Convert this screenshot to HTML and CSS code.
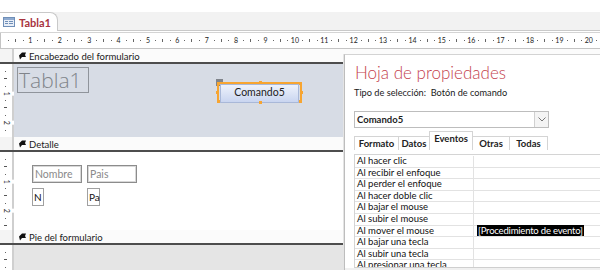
FILE: index.html
```html
<!DOCTYPE html>
<html>
<head>
<meta charset="utf-8">
<title>Tabla1</title>
<link rel="stylesheet" href="styles.css">
</head>
<body>
<div class="window">
	<div class="doc_strip">
		<div class="doc_tab">
			<svg class="form_icon" width="12" height="10" viewBox="0 0 12 10">
				<rect x="0.5" y="0.5" width="11" height="9" fill="#e8eef7" stroke="#6f8fb8"/>
				<rect x="1" y="1" width="10" height="2" fill="#8eaad0"/>
				<rect x="2" y="4" width="3" height="1" fill="#6f8fb8"/>
				<rect x="6" y="4" width="4" height="1" fill="#6f8fb8"/>
				<rect x="2" y="6" width="3" height="1" fill="#6f8fb8"/>
				<rect x="6" y="6" width="4" height="1" fill="#6f8fb8"/>
			</svg>
			<span class="doc_title">Tabla1</span>
		</div>
	</div>

	<div class="ruler_row">
		<div class="ruler_corner"></div>
		<div class="hruler">
			<span>1</span><span>2</span><span>3</span><span>4</span><span>5</span>
			<span>6</span><span>7</span><span>8</span><span>9</span><span>10</span>
			<span>11</span><span>12</span><span>13</span><span>14</span><span>15</span>
			<span>16</span><span>17</span><span>18</span><span>19</span><span>20</span>
		</div>
	</div>

	<div class="design">
		<!-- form header -->
		<div class="section_bar">
			<div class="vr_blank"></div>
			<div class="bar_label">
				<svg class="bar_icon" width="7" height="8" viewBox="0 0 7 8"><path d="M0 3.5 L3 0.5 L7 0.5 L6 3 L7 5 L3 5 L1 7.5 Z" fill="#111"/></svg>
				Encabezado del formulario
			</div>
		</div>
		<div class="section header_body">
			<div class="vruler"><span>1</span><span>2</span></div>
			<div class="canvas">
				<div class="lbl_title">Tabla1</div>
				<div class="move_handle"></div>
				<div class="sel_frame">
					<div class="cmd_button">Comando5</div>
					<i class="h h_tl"></i><i class="h h_tc"></i><i class="h h_tr"></i>
					<i class="h h_ml"></i><i class="h h_mr"></i>
					<i class="h h_bl"></i><i class="h h_bc"></i><i class="h h_br"></i>
				</div>
			</div>
		</div>

		<!-- detail -->
		<div class="section_bar">
			<div class="vr_blank"></div>
			<div class="bar_label">
				<svg class="bar_icon" width="7" height="8" viewBox="0 0 7 8"><path d="M0 3.5 L3 0.5 L7 0.5 L6 3 L7 5 L3 5 L1 7.5 Z" fill="#111"/></svg>
				Detalle
			</div>
		</div>
		<div class="section detail_body">
			<div class="vruler"><span>1</span><span>2</span></div>
			<div class="canvas">
				<div class="field_lbl lbl_nombre">Nombre</div>
				<div class="field_lbl lbl_pais">Pais</div>
				<div class="field_box box_nombre">N</div>
				<div class="field_box box_pais">Pa</div>
			</div>
		</div>

		<!-- footer -->
		<div class="section_bar">
			<div class="vr_blank"></div>
			<div class="bar_label">
				<svg class="bar_icon" width="7" height="8" viewBox="0 0 7 8"><path d="M0 3.5 L3 0.5 L7 0.5 L6 3 L7 5 L3 5 L1 7.5 Z" fill="#111"/></svg>
				Pie del formulario
			</div>
		</div>
		<div class="section footer_body">
			<div class="vruler"></div>
			<div class="canvas"></div>
		</div>
	</div>

	<!-- floating property sheet -->
	<div class="prop_sheet">
		<h1>Hoja de propiedades</h1>
		<p class="sel_type">Tipo de selección:&nbsp; Botón de comando</p>
		<div class="combo">
			<span class="combo_value">Comando5</span>
			<span class="combo_btn">
				<svg width="8" height="5" viewBox="0 0 8 5"><path d="M0.5 0.5 L4 4 L7.5 0.5" fill="none" stroke="#777" stroke-width="1"/></svg>
			</span>
		</div>
		<div class="prop_tabs">
			<span class="ptab t_formato">Formato</span>
			<span class="ptab t_datos">Datos</span>
			<span class="ptab t_eventos active">Eventos</span>
			<span class="ptab t_otras">Otras</span>
			<span class="ptab t_todas">Todas</span>
		</div>
		<div class="prop_grid">
			<div class="prow"><span class="pname">Al hacer clic</span><span class="pval"></span></div>
			<div class="prow"><span class="pname">Al recibir el enfoque</span><span class="pval"></span></div>
			<div class="prow"><span class="pname">Al perder el enfoque</span><span class="pval"></span></div>
			<div class="prow"><span class="pname">Al hacer doble clic</span><span class="pval"></span></div>
			<div class="prow"><span class="pname">Al bajar el mouse</span><span class="pval"></span></div>
			<div class="prow"><span class="pname">Al subir el mouse</span><span class="pval"></span></div>
			<div class="prow"><span class="pname">Al mover el mouse</span><span class="pval"><span class="selected_val">[Procedimiento de evento]</span></span></div>
			<div class="prow"><span class="pname">Al bajar una tecla</span><span class="pval"></span></div>
			<div class="prow"><span class="pname">Al subir una tecla</span><span class="pval"></span></div>
			<div class="prow"><span class="pname">Al presionar una tecla</span><span class="pval"></span></div>
		</div>
		<div class="sheet_bottom"></div>
	</div>
</div>
</body>
</html>
```

FILE: styles.css
```css
body {
	margin: 0;
	font-family: Lato, "Open Sans", sans-serif;
	color: #1e1e1e;
	background: #fff;
}
.window {
	position: relative;
	width: 600px;
	height: 270px;
	overflow: hidden;
	padding-top: 12px;
	box-sizing: border-box;
}

/* document tab strip */
.doc_strip {
	height: 18px;
	background: #f2f2f2;
	border-bottom: 1px solid #c9c9c9;
	display: flex;
	align-items: flex-end;
}
.doc_tab {
	display: flex;
	align-items: center;
	gap: 4px;
	height: 18px;
	padding: 0 6px 0 3px;
	background: #fff;
	border: 1px solid #c9c9c9;
	border-left: none;
	border-bottom: none;
	border-radius: 0 8px 0 0;
	margin-bottom: -1px;
}
.form_icon {
	display: block;
}
.doc_title {
	font-size: 11px;
	font-weight: 700;
	color: #a8333e;
}

/* rulers */
.ruler_row {
	display: flex;
	height: 15px;
	margin-top: 1px;
	border-top: 1px solid #d4d4d4;
	border-bottom: 1px solid #c4c4c4;
}
.ruler_corner {
	width: 13px;
	border-right: 1px solid #c4c4c4;
	background: #fff;
}
.hruler {
	flex: 1;
	display: flex;
	padding-left: 14.7px;
	background:
		repeating-linear-gradient(90deg, transparent 0 7px, #666 7px 8px, transparent 8px 14.7px) 0 7px / 100% 1px no-repeat,
		repeating-linear-gradient(90deg, transparent 0 14px, #666 14px 15px, transparent 15px 29.4px) 0 6px / 100% 3px no-repeat,
		#fff;
}
.hruler span {
	flex: none;
	width: 29.4px;
	text-align: center;
	font-size: 7px;
	line-height: 15px;
	color: #222;
}

/* design surface */
.design {
	display: flex;
	flex-direction: column;
}
.section_bar {
	display: flex;
	height: 13px;
	border-bottom: 2px solid #4d4d4d;
}
.vr_blank {
	width: 12px;
	border-right: 2px solid #cfcfcf;
	background: #f4f4f4;
}
.bar_label {
	flex: 1;
	display: flex;
	align-items: center;
	gap: 3px;
	padding: 1px 0 0 5px;
	font-size: 9.5px;
	background: #fbfbfb;
	color: #1a1a1a;
}
.bar_icon {
	display: block;
}
.section {
	display: flex;
}
.header_body {
	height: 73px;
}
.detail_body {
	height: 78px;
}
.footer_body {
	height: 40px;
}
.vruler {
	width: 12px;
	border-right: 2px solid #cfcfcf;
	display: flex;
	flex-direction: column;
	align-items: center;
	padding-top: 14.7px;
	background:
		repeating-linear-gradient(180deg, transparent 0 7px, #666 7px 8px, transparent 8px 14.7px) 5px 0 / 1px 100% no-repeat,
		repeating-linear-gradient(180deg, transparent 0 14px, #555 14px 15px, transparent 15px 29.4px) 4px 0 / 3px 100% no-repeat,
		#fff;
}
.vruler span {
	flex: none;
	height: 29.4px;
	line-height: 29.4px;
	font-size: 7px;
	color: #222;
	background: #fff;
	transform: rotate(90deg);
}
.canvas {
	position: relative;
	flex: 1;
}
.header_body .canvas {
	background: #d7dce5;
}
.detail_body .canvas {
	background: #fff;
}
.footer_body .canvas {
	background: #e5e5e5;
}

/* controls on the form canvas */
.lbl_title {
	position: absolute;
	left: 3px;
	top: 3px;
	width: 72px;
	height: 26px;
	border: 1px solid #8f949b;
	font-family: "Open Sans", sans-serif;
	font-weight: 300;
	font-size: 21px;
	line-height: 24px;
	padding-left: 1px;
	color: #80848a;
	box-sizing: border-box;
}
.move_handle {
	position: absolute;
	left: 202px;
	top: 15px;
	width: 7px;
	height: 7px;
	background: #80848a;
}
.sel_frame {
	position: absolute;
	left: 203px;
	top: 18px;
	width: 85px;
	height: 21px;
	border: 2px solid #f7a531;
	box-sizing: border-box;
}
.cmd_button {
	height: 100%;
	margin: 0 1px;
	border: 1px solid #a9b8d8;
	background: linear-gradient(#eef2fb, #c9d5f0);
	font-size: 10.5px;
	line-height: 15px;
	text-align: center;
	color: #222;
}
.h {
	position: absolute;
	width: 3px;
	height: 3px;
	background: #f7a531;
}
.h_tl { left: -2px; top: -2px; }
.h_tc { left: 40px; top: -3px; }
.h_tr { right: -2px; top: -2px; }
.h_ml { left: -3px; top: 7px; }
.h_mr { right: -3px; top: 7px; }
.h_bl { left: -2px; bottom: -2px; }
.h_bc { left: 40px; bottom: -3px; }
.h_br { right: -2px; bottom: -2px; }

.field_lbl {
	position: absolute;
	top: 13px;
	width: 50px;
	height: 18px;
	border: 1px solid #8c8c8c;
	box-shadow: inset 0 0 0 1px #d8d8d8;
	font-size: 10.5px;
	line-height: 16px;
	padding-left: 2px;
	color: #8a8a8a;
	box-sizing: border-box;
}
.lbl_nombre { left: 18px; }
.lbl_pais { left: 73px; }
.field_box {
	position: absolute;
	top: 36px;
	height: 18px;
	border: 1px solid #a0a0a0;
	font-size: 10px;
	line-height: 16px;
	padding-left: 1px;
	color: #111;
	white-space: nowrap;
	box-sizing: border-box;
}
.box_nombre { left: 18px; width: 12px; }
.box_pais { left: 73px; width: 13px; }

/* property sheet */
.prop_sheet {
	position: absolute;
	left: 344px;
	top: 54px;
	right: 0;
	bottom: 0;
	display: flex;
	flex-direction: column;
	padding-left: 9px;
	background: #fff;
	border-left: 1px solid #bdbdbd;
	border-top: 1px solid #d3d3d3;
	box-shadow: -1px 0 0 #e4e4e4;
}
.prop_sheet h1 {
	margin: 7px 0 0 1px;
	font-weight: 300;
	font-size: 17px;
	line-height: 22px;
	color: #c4424e;
}
.sel_type {
	margin: 3px 0 0 0;
	font-size: 9.2px;
	line-height: 12px;
	color: #1a1a1a;
}
.combo {
	display: flex;
	width: 195px;
	height: 17px;
	margin-top: 12px;
	border: 1px solid #bdbdbd;
	box-sizing: border-box;
}
.combo_value {
	flex: 1;
	padding-left: 2px;
	font-size: 9.5px;
	line-height: 15px;
	font-weight: 700;
}
.combo_btn {
	width: 13px;
	display: flex;
	align-items: center;
	justify-content: center;
	border-left: 1px solid #d0d0d0;
	background: #f4f4f4;
}
.prop_tabs {
	display: flex;
	align-items: flex-end;
	height: 19px;
	margin-top: 3px;
}
.ptab {
	height: 14px;
	border: 1px solid #d4d4d4;
	border-bottom: none;
	margin-right: -1px;
	font-size: 9.5px;
	line-height: 14px;
	font-weight: 700;
	text-align: center;
	color: #222;
	background: #fff;
	box-sizing: border-box;
}
.t_formato { width: 45px; }
.t_datos { width: 32px; }
.t_eventos { width: 44px; }
.t_otras { width: 38px; }
.t_todas { width: 39px; }
.ptab.active {
	position: relative;
	z-index: 1;
	height: 19px;
	line-height: 13px;
}
.prop_grid {
	height: 111px;
	width: 260px;
	overflow: hidden;
	margin-top: 4px;
	border-top: 1px solid #d4d4d4;
	border-left: 1px solid #d4d4d4;
	border-bottom: 1px solid #cfcfcf;
	padding-top: 1px;
}
.prow {
	display: flex;
	height: 11.6px;
	border-bottom: 1px solid #e2e2e2;
	box-sizing: border-box;
	font-size: 9.5px;
	line-height: 10.6px;
}
.pname {
	width: 119px;
	flex: none;
	padding-left: 2px;
	border-right: 1px solid #e2e2e2;
	box-sizing: border-box;
	white-space: nowrap;
	color: #111;
}
.pval {
	flex: 1;
	padding-left: 3px;
	white-space: nowrap;
}
.selected_val {
	background: #000;
	color: #fff;
	padding: 0 1px;
	letter-spacing: -0.2px;
}
.sheet_bottom {
	flex: 1;
	margin-left: -9px;
	background: #f0f0f0;
}
```
